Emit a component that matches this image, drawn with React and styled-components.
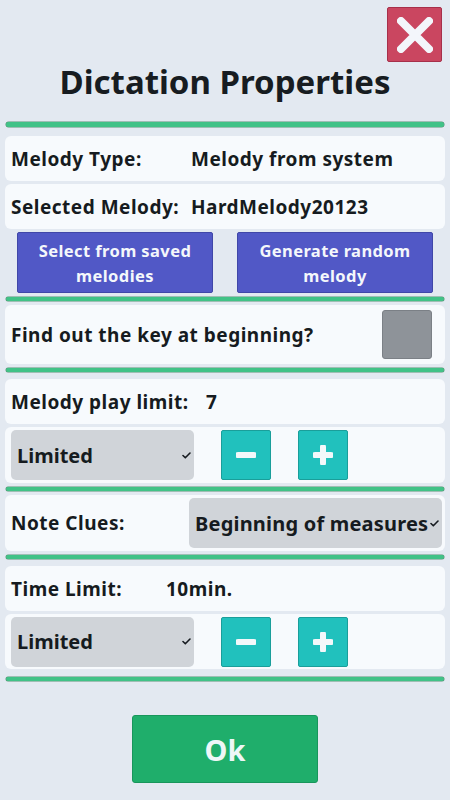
import React from "react";
import styled, { createGlobalStyle } from "styled-components";

const GlobalStyle = createGlobalStyle`
  html, body {
    margin: 0;
    padding: 0;
    background: #e3e9f1;
  }
  body {
    font-family: "Noto Sans", "DejaVu Sans", sans-serif;
    color: #161b20;
  }
  button {
    box-sizing: border-box;
  }
`;

const Screen = styled.div`
  width: 450px;
  height: 800px;
  display: flex;
  flex-direction: column;
  background: #e3e9f1;
  overflow: hidden;
`;

const TopBar = styled.div`
  display: flex;
  justify-content: flex-end;
  padding: 7px 8px 0 0;
`;

const CloseButton = styled.button`
  width: 55px;
  height: 55px;
  padding: 0;
  background: #ca4660;
  border: 1px solid #a7304a;
  border-radius: 2px;
  display: flex;
  align-items: center;
  justify-content: center;
`;

const Title = styled.h1`
  margin: 0;
  text-align: center;
  font-size: 33px;
  line-height: 40px;
  font-weight: 700;
  color: #171c21;
`;

const Divider = styled.div`
  height: ${(p) => p.$h ?? 4}px;
  margin: ${(p) => p.$top}px 6px 0;
  background: #41c287;
  border-radius: 3px;
  box-shadow: 0 0 0 0.5px #5c9478;
`;

const Card = styled.div`
  box-sizing: border-box;
  height: ${(p) => p.$h}px;
  margin: ${(p) => p.$top}px 5px 0;
  padding: 0 ${(p) => p.$right ?? 6}px 0 6px;
  background: #f7fafd;
  border-radius: 6px;
  display: flex;
  align-items: center;
`;

const Label = styled.span`
  font-size: 19px;
  font-weight: 700;
  letter-spacing: 0.5px;
  width: ${(p) => (p.$w ? `${p.$w}px` : "auto")};
  flex: none;
  white-space: nowrap;
`;

const Value = styled.span`
  font-size: 19px;
  font-weight: 700;
  letter-spacing: 0.5px;
  white-space: nowrap;
`;

const ButtonRow = styled.div`
  margin-top: 3px;
  padding: 0 17px;
  display: flex;
  justify-content: space-between;
`;

const ActionButton = styled.button`
  width: 196px;
  height: 61px;
  padding: 0 8px;
  background: #5158c6;
  border: 1px solid #4047a8;
  border-radius: 2px;
  color: #f4f7fb;
  font-family: inherit;
  font-size: 16.5px;
  letter-spacing: 0.4px;
  line-height: 25px;
  font-weight: 700;
`;

const SelectBox = styled.div`
  box-sizing: border-box;
  width: ${(p) => p.$w}px;
  height: 50px;
  padding: 0 3px 0 6px;
  background: #d0d4d9;
  border-radius: 5px;
  display: flex;
  align-items: center;
  justify-content: space-between;
  font-size: 20px;
  font-weight: 700;
  letter-spacing: ${(p) => p.$ls ?? 0}px;
  white-space: nowrap;
`;

const Chevron = () => (
  <svg width="9" height="7" viewBox="0 0 9 7">
    <polyline points="1,3.5 3.3,5.8 8,1" fill="none" stroke="#161b20" strokeWidth="1.6" strokeLinecap="round" strokeLinejoin="round" />
  </svg>
);

const Stepper = styled.div`
  margin-left: 27px;
  display: flex;
  gap: 27px;
`;

const StepButton = styled.button`
  width: 50px;
  height: 50px;
  padding: 0;
  background: #21c1bd;
  border: 1px solid #1a9e9a;
  border-radius: 2px;
  display: flex;
  align-items: center;
  justify-content: center;
`;

const CheckBox = styled.div`
  width: 50px;
  height: 49px;
  margin-left: auto;
  background: #8e9399;
  border: 1px solid #7b8086;
  border-radius: 3px;
  box-sizing: border-box;
`;

const Footer = styled.div`
  margin-top: 34px;
  display: flex;
  justify-content: center;
`;

const OkButton = styled.button`
  width: 186px;
  height: 68px;
  background: #1fae6b;
  border: 1px solid #18965b;
  border-radius: 3px;
  color: #eef7f7;
  font-family: inherit;
  font-size: 29px;
  font-weight: 700;
`;

const CloseIcon = () => (
  <svg width="36" height="36" viewBox="0 0 36 36">
    <path d="M4 4 L32 32 M32 4 L4 32" stroke="#f3f6fb" strokeWidth="8" strokeLinecap="round" />
  </svg>
);

const MinusIcon = () => (
  <svg width="20" height="20" viewBox="0 0 20 20">
    <path d="M2 10 H18" stroke="#f3f8fa" strokeWidth="6" strokeLinecap="round" />
  </svg>
);

const PlusIcon = () => (
  <svg width="20" height="20" viewBox="0 0 20 20">
    <path d="M2 10 H18 M10 2 V18" stroke="#f3f8fa" strokeWidth="6" strokeLinecap="round" />
  </svg>
);

const LimitControls = () => (
  <>
    <SelectBox $w={183}>
      Limited
      <Chevron />
    </SelectBox>
    <Stepper>
      <StepButton aria-label="decrease">
        <MinusIcon />
      </StepButton>
      <StepButton aria-label="increase">
        <PlusIcon />
      </StepButton>
    </Stepper>
  </>
);

export default function App() {
  return (
    <Screen>
      <GlobalStyle />
      <TopBar>
        <CloseButton aria-label="close">
          <CloseIcon />
        </CloseButton>
      </TopBar>
      <Title>Dictation Properties</Title>
      <Divider $top={20} $h={5} />

      <Card $top={9} $h={45}>
        <Label $w={180}>Melody Type:</Label>
        <Value>Melody from system</Value>
      </Card>
      <Card $top={3} $h={45}>
        <Label $w={180}>Selected Melody:</Label>
        <Value>HardMelody20123</Value>
      </Card>
      <ButtonRow>
        <ActionButton>Select from saved melodies</ActionButton>
        <ActionButton>Generate random melody</ActionButton>
      </ButtonRow>
      <Divider $top={4} />

      <Card $top={4} $h={59} $right={13}>
        <Label>Find out the key at beginning?</Label>
        <CheckBox />
      </Card>
      <Divider $top={4} />

      <Card $top={7} $h={45}>
        <Label $w={195}>Melody play limit:</Label>
        <Value>7</Value>
      </Card>
      <Card $top={3} $h={56}>
        <LimitControls />
      </Card>
      <Divider $top={4} />

      <Card $top={4} $h={56} $right={2}>
        <Label $w={178}>Note Clues:</Label>
        <SelectBox $w={253} $ls={0.2}>
          Beginning of measures
          <Chevron />
        </SelectBox>
      </Card>
      <Divider $top={4} />

      <Card $top={7} $h={45}>
        <Label $w={155}>Time Limit:</Label>
        <Value>10min.</Value>
      </Card>
      <Card $top={3} $h={55}>
        <LimitControls />
      </Card>
      <Divider $top={8} />

      <Footer>
        <OkButton>Ok</OkButton>
      </Footer>
    </Screen>
  );
}
